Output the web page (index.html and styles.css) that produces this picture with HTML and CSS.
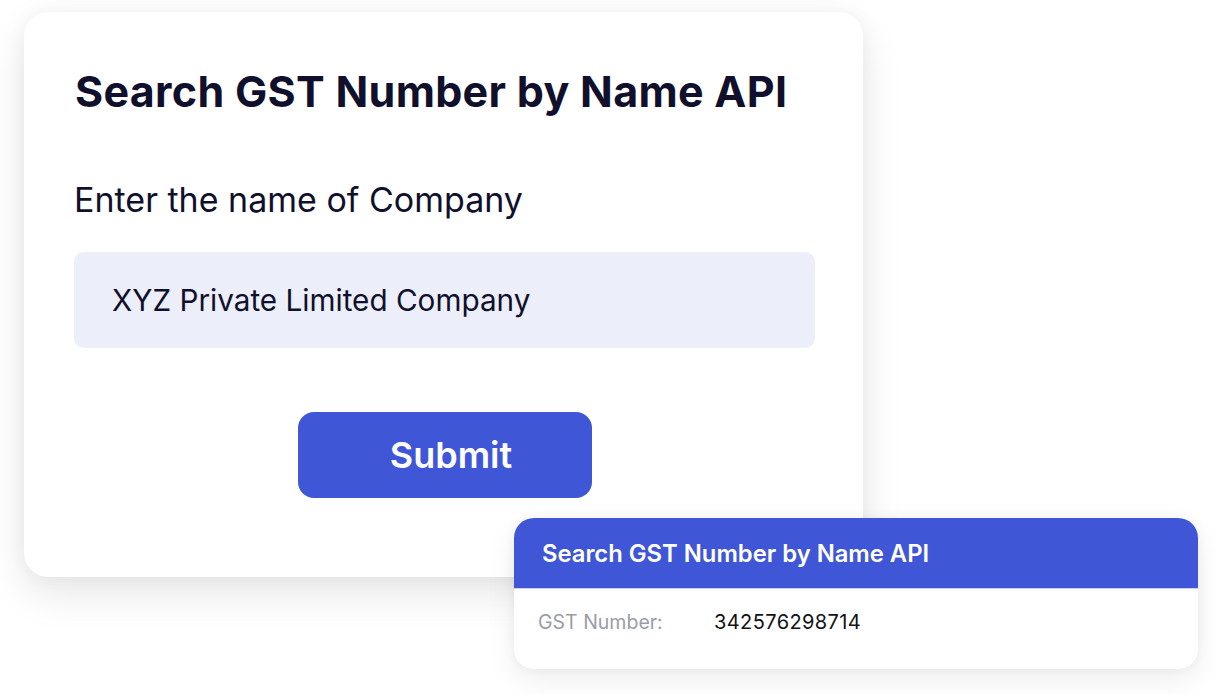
FILE: index.html
```html
<!DOCTYPE html>
<html>
<head>
<meta charset="utf-8">
<link rel="stylesheet" href="styles.css">
</head>
<body>
<div class="stage">
  <div class="card">
    <h1 class="title">Search GST Number by Name API</h1>
    <label class="label">Enter the name of Company</label>
    <div class="input">XYZ Private Limited Company</div>
    <div class="actions"><button class="submit">Submit</button></div>
  </div>
  <div class="result">
    <div class="result-head">Search GST Number by Name API</div>
    <div class="result-body">
      <span class="key">GST Number:</span>
      <span class="val">342576298714</span>
    </div>
  </div>
</div>
</body>
</html>
```

FILE: styles.css
```css
html, body {
  margin: 0;
  padding: 0;
  background: #ffffff;
  font-family: Inter, "Noto Sans", sans-serif;
  color: #0f0f2b;
}
.stage {
  position: relative;
  width: 1216px;
  height: 694px;
  overflow: hidden;
  padding: 12px 0 0 24px;
  box-sizing: border-box;
}
.card {
  width: 839px;
  height: 565px;
  box-sizing: border-box;
  background: #fff;
  border-radius: 24px;
  box-shadow: 0 16px 40px rgba(0, 0, 0, 0.10), 0 0 20px rgba(0, 0, 0, 0.04);
  padding: 57px 40px 0 50px;
  display: flex;
  flex-direction: column;
}
.title {
  margin: 0 0 0 1px;
  font-size: 43px;
  line-height: 44px;
  font-weight: 700;
  color: #10102c;
  letter-spacing: 0.3px;
  white-space: nowrap;
}
.label {
  margin-top: 67px;
  font-size: 34px;
  line-height: 40px;
  font-weight: 400;
  color: #10102c;
}
.input {
  margin-top: 32px;
  width: 741px;
  height: 96px;
  box-sizing: border-box;
  background: #eceefa;
  border-radius: 10px;
  padding-left: 38px;
  display: flex;
  align-items: center;
  font-size: 29.7px;
  color: #10102c;
}
.actions {
  margin-top: 64px;
  padding-left: 224px;
}
.submit {
  width: 294px;
  height: 86px;
  border: none;
  border-radius: 16px;
  background: #3f56d6;
  color: #fff;
  font-family: Inter, "Noto Sans", sans-serif;
  font-size: 36px;
  font-weight: 600;
  padding: 0 0 0 12px;
}
.result {
  position: absolute;
  left: 514px;
  top: 518px;
  width: 684px;
  height: 151px;
  background: #fff;
  border-radius: 20px;
  overflow: hidden;
  box-shadow: 0 10px 30px rgba(0, 0, 0, 0.08), 0 0 12px rgba(0, 0, 0, 0.04);
}
.result-head {
  height: 71px;
  background: #3f56d6;
  color: #fff;
  font-size: 23.8px;
  font-weight: 600;
  display: flex;
  align-items: center;
  padding-left: 28px;
  border-bottom: 1px solid #c9cff3;
  box-sizing: border-box;
}
.result-body {
  display: flex;
  align-items: center;
  height: 66px;
  padding-left: 24px;
}
.key {
  width: 176px;
  font-size: 19.5px;
  color: #9a9ca8;
}
.val {
  font-size: 20px;
  letter-spacing: 0.4px;
  color: #111116;
}
```
